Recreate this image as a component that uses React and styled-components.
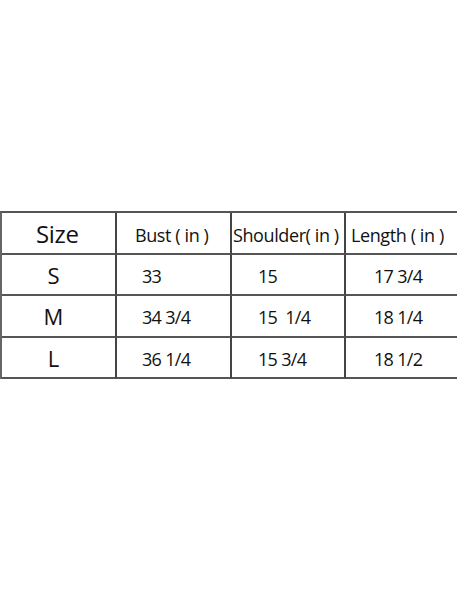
import React from 'react'
import styled, { createGlobalStyle } from 'styled-components'

const GlobalStyle = createGlobalStyle`
  html, body {
    margin: 0;
    padding: 0;
    background: #fff;
  }
  body {
    font-family: 'Open Sans', 'Noto Sans', sans-serif;
    color: #111;
  }
`

const headers = [
  { label: 'Size', big: true, pad: 34 },
  { label: 'Bust ( in )', pad: 18 },
  { label: 'Shoulder( in )', pad: 1 },
  { label: 'Length ( in )', pad: 5 },
]

const rows = [
  ['S', '33', '15', '17 3/4'],
  ['M', '34 3/4', '15  1/4', '18 1/4'],
  ['L', '36 1/4', '15 3/4', '18 1/2'],
]

const valuePads = [0, 25, 26, 28]
const rowHeights = [42, 41, 42, 41]

export default function App() {
  return (
    <>
      <GlobalStyle />
      <Page>
        <Chart>
          {headers.map((h) => (
            <HeadCell key={h.label} $pad={h.pad} $big={h.big} $height={rowHeights[0]}>
              {h.label}
            </HeadCell>
          ))}
          {rows.map((row, r) =>
            row.map((value, c) =>
              c === 0 ? (
                <SizeCell key={r + '-' + c} $height={rowHeights[r + 1]}>
                  {value}
                </SizeCell>
              ) : (
                <ValueCell key={r + '-' + c} $pad={valuePads[c]} $height={rowHeights[r + 1]}>
                  {value}
                </ValueCell>
              )
            )
          )}
        </Chart>
      </Page>
    </>
  )
}

const Page = styled.div`
  width: 457px;
  height: 600px;
  overflow: hidden;
  padding-top: 211px;
  box-sizing: border-box;
`

const Chart = styled.div`
  display: grid;
  grid-template-columns: 115px 115px 114px 130px;
  width: 474px;
  border-top: 2px solid #555;
  border-left: 2px solid #666;
`

const Cell = styled.div`
  box-sizing: border-box;
  height: ${(p) => p.$height}px;
  border-right: 2px solid #444;
  border-bottom: 2px solid #555;
  display: flex;
  align-items: center;
  white-space: pre;
`

const HeadCell = styled(Cell)`
  padding-left: ${(p) => p.$pad}px;
  font-size: ${(p) => (p.$big ? '24px' : '18px')};
  letter-spacing: ${(p) => (p.$big ? '-0.3px' : '-0.4px')};
  padding-top: ${(p) => (p.$big ? '0' : '4px')};
`

const SizeCell = styled(Cell)`
  justify-content: center;
  padding-right: 10px;
  font-size: 22px;
`

const ValueCell = styled(Cell)`
  padding-left: ${(p) => p.$pad}px;
  padding-top: 2px;
  font-size: 18px;
  letter-spacing: -0.7px;
`
